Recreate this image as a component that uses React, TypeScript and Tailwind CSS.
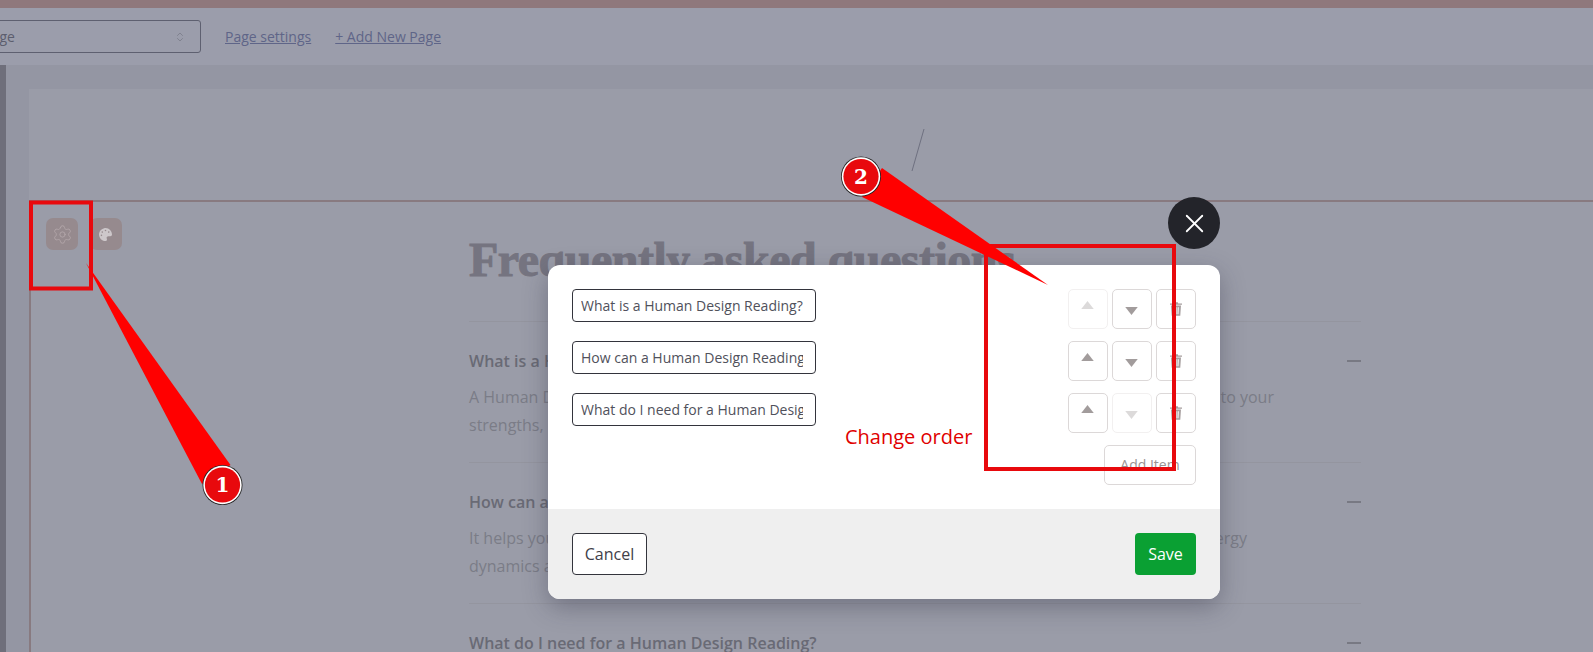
import { ChevronsUpDown, Settings, X } from "lucide-react";
import { FaPalette } from "react-icons/fa";

const faqs = [
  {
    q: "What is a Human Design Reading?",
    a: ["A Human Design Reading is a personalized look at your truly unique energy type, giving you insight into your", "strengths, decision-making style and purpose."],
  },
  {
    q: "How can a Human Design Reading help me?",
    a: ["It helps you better understand how you are designed to work, rest and relate, including your own energy", "dynamics and the way you connect with others."],
  },
  {
    q: "What do I need for a Human Design Reading?",
    a: ["You only need your date, time and place of birth.", ""],
  },
];

const rows = [
  { text: "What is a Human Design Reading?", upOff: true, downOff: false },
  { text: "How can a Human Design Reading help me?", upOff: false, downOff: false },
  { text: "What do I need for a Human Design Reading?", upOff: false, downOff: true },
];

function Arrow({ dir, off }: { dir: "up" | "down"; off: boolean }) {
  return (
    <button
      className={`flex h-10 w-10 justify-center rounded-[5px] border pr-[2px] ${off ? "border-[#f2f0f0]" : "border-[#dcd8d8]"} ${dir === "up" ? "pt-[11px]" : "pt-[17px]"}`}
    >
      <svg width="13" height="8" viewBox="0 0 14 9">
        <path d={dir === "up" ? "M7 0 14 9H0Z" : "M0 0H14L7 9Z"} fill={off ? "#dcdada" : "#a29c9c"} />
      </svg>
    </button>
  );
}

function Trash() {
  return (
    <button className="flex h-10 w-10 items-center justify-center rounded-[5px] border border-[#dcd8d8] pr-[1px]">
      <svg width="12" height="16" viewBox="0 0 14 16" fill="#a69e9e">
        <path d="M5 0h4l.6 1.5H14V3H0V1.5h4.4Z" />
        <path d="M1.2 4h11.6L12 16H2Zm2.6 2 .4 8h1.2l-.3-8Zm2.6 0v8h1.2V6Zm2.6 0-.3 8h1.2l.4-8Z" fillRule="evenodd" />
      </svg>
    </button>
  );
}

function Annotations() {
  return (
    <svg className="pointer-events-none absolute inset-0" width="1593" height="652" viewBox="0 0 1593 652">
      <rect x="31" y="202.5" width="60" height="86" fill="none" stroke="#e8090d" strokeWidth="4" />
      <rect x="986" y="246" width="188" height="223" fill="none" stroke="#e8090d" strokeWidth="4" />
      <path d="M86 263 230.5 465 202 484Z" fill="#ff0000" />
      <path d="M1048 285 882 168 862 197Z" fill="#ff0000" />
      {[
        { x: 222.5, y: 485, n: "1" },
        { x: 861, y: 176.5, n: "2" },
      ].map((c) => (
        <g key={c.n}>
          <circle cx={c.x} cy={c.y} r="20" fill="#222" />
          <circle cx={c.x} cy={c.y} r="19.2" fill="#fff" />
          <circle cx={c.x} cy={c.y} r="17.6" fill="#e8090d" />
          <text x={c.x} y={c.y + 7} textAnchor="middle" fill="#fff" fontSize="20" fontWeight="700" fontFamily="DejaVu Serif, serif">
            {c.n}
          </text>
        </g>
      ))}
    </svg>
  );
}

export default function App() {
  return (
    <div className="relative h-[652px] w-[1593px] overflow-hidden bg-[#95979f] font-['Open_Sans',sans-serif]">
      <div className="h-2 bg-[#8f787c]" />

      {/* Toolbar */}
      <div className="flex h-[57px] items-center gap-6 bg-[#9b9dab] text-sm text-[#5f6588]">
        <div className="-ml-[73px] flex h-[33px] w-[274px] items-center justify-between rounded-[3px] border border-[#5e6070] pr-[14px] pl-3 text-[#5c5e6e]">
          <span>Home Page</span>
          <ChevronsUpDown size={12} className="text-[#80828f]" />
        </div>
        <a className="underline">Page settings</a>
        <a className="underline">+ Add New Page</a>
      </div>

      {/* Editor */}
      <div className="flex h-[587px]">
        <div className="w-[6px] bg-[#6f6f7b]" />
        <div className="flex-1 bg-[#9496a3] pt-6 pl-[23px]">
          <div className="h-full bg-[#9a9ca8]">
            <div className="h-[113px] border-b-2 border-[#887a80] pt-[39px] pl-[882px]">
              <svg width="14" height="44" viewBox="0 0 14 44">
                <path d="M13 1 1 43" stroke="#6e7080" strokeWidth="1" fill="none" />
              </svg>
            </div>
            <div className="flex h-full border-l-2 border-[#887a80]">
              <div className="flex gap-3 pt-4 pl-[15px]">
                <div className="flex h-8 w-8 items-center justify-center rounded-[7px] bg-[#968a8e]">
                  <Settings size={21} strokeWidth={1} className="text-[#b3a7aa]" />
                </div>
                <div className="flex h-8 w-8 items-center justify-center rounded-[7px] bg-[#968a8e] pr-[1px]">
                  <FaPalette size={13} className="text-[#cdc7ca]" />
                </div>
              </div>
              <div className="ml-[347px] w-[892px]">
                <h1 className="mt-[30px] mb-[33px] h-14 font-['Liberation_Serif',serif] text-5xl leading-14 font-bold tracking-[-0.5px] text-[#757480] [-webkit-text-stroke:1px_#757480]">
                  Frequently asked questions
                </h1>
                {faqs.map((f) => (
                  <div key={f.q} className="border-t border-[#94959f] pt-7 pb-[23px]">
                    <div className="flex items-center justify-between">
                      <span className="text-base leading-[22px] font-semibold whitespace-nowrap text-[#696a75]">{f.q}</span>
                      <div className="h-[2px] w-[14px] bg-[#787983]" />
                    </div>
                    <p className="mt-3 text-base leading-[27.5px] whitespace-nowrap text-[#7b7c87]">
                      {f.a[0]}
                      <br />
                      {f.a[1]}
                    </p>
                  </div>
                ))}
              </div>
            </div>
          </div>
        </div>
      </div>

      {/* Modal */}
      <div className="absolute top-[265px] left-[548px] w-[672px] rounded-xl bg-white shadow-[0_8px_24px_rgba(40,40,60,0.35)]">
        <div className="p-6">
          <div className="flex flex-col gap-3">
            {rows.map((r) => (
              <div key={r.text} className="flex items-start justify-between">
                <input
                  readOnly
                  value={r.text}
                  className="h-[33px] w-[244px] rounded-[4px] border border-[#33343c] pr-3 pl-2 text-sm text-[#50515b] outline-none"
                />
                <div className="flex gap-1">
                  <Arrow dir="up" off={r.upOff} />
                  <Arrow dir="down" off={r.downOff} />
                  <Trash />
                </div>
              </div>
            ))}
          </div>
          <div className="mt-3 flex justify-end">
            <button className="h-10 w-[92px] rounded-[5px] border border-[#dcd8d8] text-sm text-[#9a9393]">Add Item</button>
          </div>
        </div>
        <div className="flex items-center justify-between rounded-b-xl bg-[#efefef] p-6">
          <button className="h-[42px] w-[75px] rounded-[4px] border border-[#33343c] bg-white text-base text-[#3f4049]">Cancel</button>
          <button className="h-[42px] w-[61px] rounded-[4px] bg-[#0aa033] text-base text-white">Save</button>
        </div>
      </div>

      {/* Close */}
      <button className="absolute top-[197px] left-[1168px] flex h-[52px] w-[52px] items-center justify-center rounded-full bg-[#23242a]">
        <X size={31} strokeWidth={1.4} className="text-white" />
      </button>

      <div className="absolute top-[422px] left-[845px] text-xl leading-[30px] text-[#e00000]">Change order</div>

      <Annotations />
    </div>
  );
}
